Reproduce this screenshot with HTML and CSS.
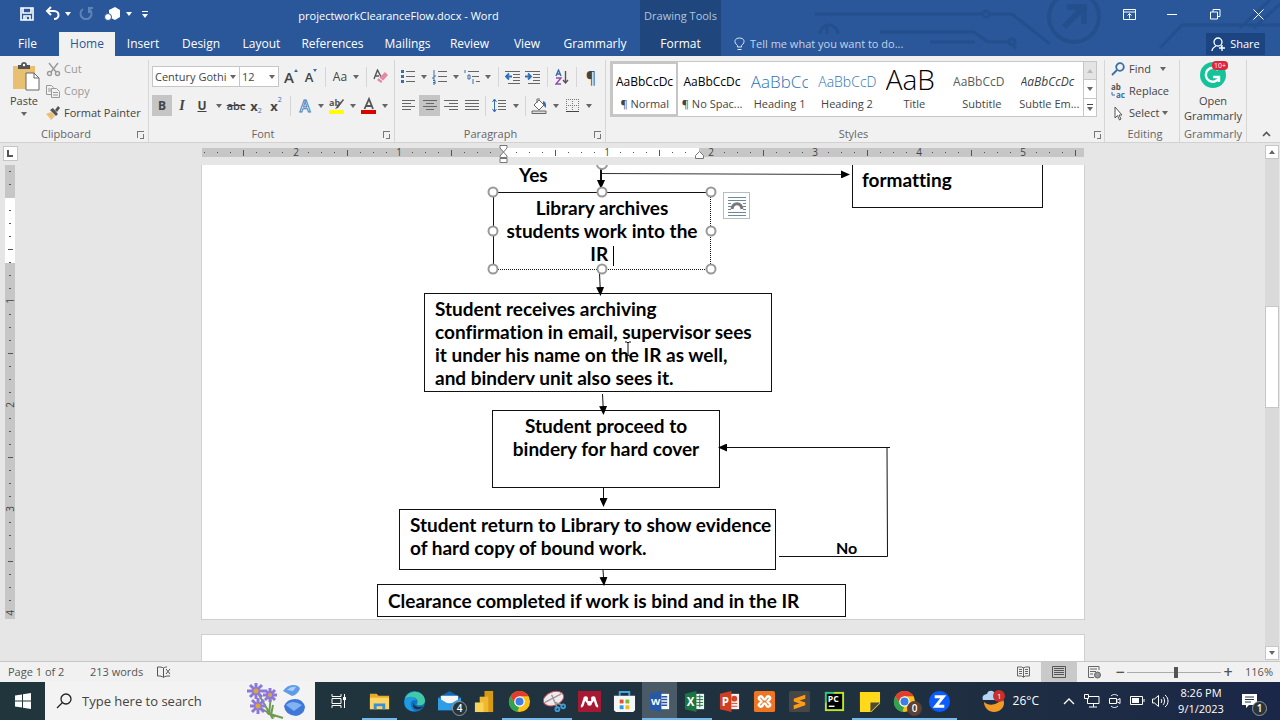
FILE: index.html
```html
<!DOCTYPE html>
<html lang="en">
<head>
  <meta charset="UTF-8" />
  <meta name="viewport" content="width=device-width, initial-scale=1.0" />
  <title>projectworkClearanceFlow.docx - Word</title>
  <link rel="stylesheet" href="styles.css">
</head>
<body>
  <header class="top">
    <svg class="circuit" width="480" height="56" viewBox="0 0 480 56" fill="none" stroke="#214d88" stroke-width="3">
      <path d="M15 14h25M20 34a9 9 0 0 1 18 0M27 34v-8M40 14h142M190 14h22l38 30M80 32h94l14 10h20l8 6M130 42h45" />
      <circle cx="186" cy="14" r="3" /><circle cx="212" cy="42" r="3" />
      <circle cx="274" cy="17" r="25" stroke-width="4" />
      <path d="M264 27l19-19M267 7h17v17" stroke-width="6" />
      <path d="M360 48l22-23h98M440 28l30-28M454 28l26-24" />
    </svg>
    <div class="titlebar">
      <div class="quick">
        <button aria-label="Save"><svg width="16" height="16" viewBox="0 0 16 16" fill="none" stroke="#fff" stroke-width="1.6"><path d="M2 2h12v12H2zM4 2v5h8V2M5 14v-4h6v4M7 11v3" /></svg></button>
        <button class="undo" aria-label="Undo"><svg width="16" height="16" viewBox="0 0 16 16" fill="none" stroke="#fff" stroke-width="2"><path d="M6 1L2 5l4 4M2 5h7c6 0 6 8 0 8" /></svg></button>
        <button class="arrow light" aria-label="Undo list"></button>
        <button class="redo" aria-label="Redo"><svg width="16" height="16" viewBox="0 0 16 16" fill="none" stroke="#5f84b8" stroke-width="2"><path d="M5 3a5.500 5.500 0 1 0 6 0M11 7V2h4" /></svg></button>
        <button class="shapes" aria-label="Shapes"><svg width="18" height="16" viewBox="0 0 18 16" fill="#fff"><path d="M5 4l6-3 5 3v7l-5 3-6-3z" /><circle cx="4" cy="11" r="3.500" stroke="#2a579a" /></svg></button>
        <button class="arrow light" aria-label="Shapes list"></button>
        <button class="arrow light more" aria-label="Customize toolbar"></button>
      </div>
      <div class="title">projectworkClearanceFlow.docx - Word</div>
      <div class="context-title">Drawing Tools</div>
      <div class="window-buttons">
        <button aria-label="Ribbon display"><svg width="13" height="11" viewBox="0 0 13 11" fill="none" stroke="#fff"><path d="M.5 .5h12v10H.5zM.5 3h12M6.500 9.500V5M4.500 6.500l2-2 2 2" /></svg></button>
        <button aria-label="Minimize"><svg width="11" height="11" viewBox="0 0 11 11" stroke="#fff"><path d="M0 5.500h10" /></svg></button>
        <button aria-label="Restore"><svg width="11" height="11" viewBox="0 0 11 11" fill="none" stroke="#fff"><path d="M.5 3h7v7h-7zM3 3V.5h7v7H7.500" /></svg></button>
        <button aria-label="Close"><svg width="11" height="11" viewBox="0 0 11 11" stroke="#fff"><path d="M.5 .5l10 10M10.500 .5l-10 10" /></svg></button>
      </div>
    </div>
    <nav class="tabs">
      <button class="file">File</button><button class="active">Home</button><button>Insert</button>
      <button>Design</button><button>Layout</button><button>References</button>
      <button>Mailings</button><button>Review</button><button>View</button>
      <button>Grammarly</button><button class="context">Format</button>
      <label class="tell">
        <svg width="11" height="14" viewBox="0 0 11 14" fill="none" stroke="#dfe8f5"><path d="M3.500 10V8.500C-1 5 1 1 5.500 1S12 5 7.500 8.500V10zM3.500 12.500h4" /></svg>
        <input type="text" placeholder="Tell me what you want to do..." />
      </label>
      <button class="share"><svg width="15" height="15" viewBox="0 0 15 15" fill="none" stroke="#fff" stroke-width="1.300"><circle cx="7" cy="5" r="4" /><path d="M1 14c0-3 2-4 4-5M10 9l1 1M11 8v6M8 11h6" /></svg>Share</button>
    </nav>
  </header>

  <section class="ribbon">
    <div class="group clipboard">
      <div class="group-body">
        <button class="big">
          <svg width="28" height="29" viewBox="0 0 28 29"><path d="M1 4h22v23H1z" fill="#e9bf72" /><path d="M6 7V3h3c0-4 6-4 6 0h3v4z" fill="#555" /><circle cx="12" cy="3" r="1.200" fill="#fff" /><path d="M14 11h8l5 5v12H14z" fill="#fff" stroke="#666" /><path d="M22 11v5h5" fill="none" stroke="#666" /></svg>
          Paste<i class="caret"></i>
        </button>
        <div class="stack">
          <button class="off"><svg width="15" height="15" viewBox="0 0 15 15" fill="none" stroke="#999" stroke-width="1.400"><path d="M3 1l7 9M12 1L5 10" /><circle cx="3.500" cy="11.500" r="2" /><circle cx="11.500" cy="11.500" r="2" /></svg>Cut</button>
          <button class="off"><svg width="15" height="15" viewBox="0 0 15 15" fill="#f1f1f1" stroke="#999"><path d="M.5 1.500h5l2 2v7h-7zM2 5h3M2 7h3" /><path d="M5.500 4.500h5l3 3v6h-8zM7 8.500h5M7 11h5" /></svg>Copy</button>
          <button><svg width="15" height="15" viewBox="0 0 15 15"><path d="M0 8l5-2 4 4-4 4c-1-2-3-4-5-6z" fill="#e9bf72" /><path d="M4 4l3-2 5 6-2 2zM9 4l3-4 2 2-3 4z" fill="#555" /></svg>Format Painter</button>
        </div>
      </div>
      <div class="group-name">Clipboard<button class="launch" aria-label="Clipboard settings"></button></div>
    </div>

    <div class="group font">
      <div class="group-body rows">
        <div class="row">
          <span class="combo family"><select aria-label="Font"><option>Century Gothic</option></select></span>
          <span class="combo size"><select aria-label="Font size"><option>12</option></select></span>
          <button class="tool" aria-label="Grow font"><span class="grow">A</span><i class="mark up"></i></button>
          <button class="tool" aria-label="Shrink font"><span class="shrink">A</span><i class="mark"></i></button>
          <i class="sep"></i>
          <button class="tool case">Aa</button><button class="arrow" aria-label="Case list"></button>
          <i class="sep"></i>
          <button class="tool" aria-label="Clear formatting"><svg width="16" height="16" viewBox="0 0 16 16"><path d="M1 10L4.500 1 8 8M2.500 7H6" fill="none" stroke="#555" stroke-width="1.400" /><path d="M12 3l3 3-7 8-4-3z" fill="#e68aa2" /><path d="M6 9l4 3" stroke="#fff" /></svg></button>
        </div>
        <div class="row">
          <button class="tool on"><b>B</b></button>
          <button class="tool italic">I</button>
          <button class="tool under">U</button><button class="arrow wide" aria-label="Underline list"></button>
          <button class="tool strike">abc</button>
          <button class="tool script"><b>x</b><sub>2</sub></button>
          <button class="tool script"><b>x</b><sup>2</sup></button>
          <i class="sep"></i>
          <button class="tool effect">A</button><button class="arrow" aria-label="Effects list"></button>
          <button class="tool" aria-label="Highlight"><svg width="18" height="18" viewBox="0 0 18 18"><path d="M1 13h15v4H1z" fill="#ff0" /><text x="1" y="9" font-size="9" font-weight="700" fill="#555">ab</text><path d="M15 2L9 9l-2 3 3-1 6-8z" fill="#555" /></svg></button><button class="arrow" aria-label="Highlight list"></button>
          <button class="tool" aria-label="Font color"><svg width="18" height="18" viewBox="0 0 18 18"><path d="M1 13h15v4H1z" fill="#d90000" /><path d="M4.500 12L9 2l4 10M6 9h6" fill="none" stroke="#555" stroke-width="1.800" /></svg></button><button class="arrow" aria-label="Color list"></button>
        </div>
      </div>
      <div class="group-name">Font<button class="launch" aria-label="Font settings"></button></div>
    </div>

    <div class="group paragraph">
      <div class="group-body rows">
        <div class="row">
          <button class="tool" aria-label="Bullets"><svg class="lines" width="16" height="16" viewBox="0 0 16 16"><path d="M6 2.500h9M6 7.500h9M6 12.500h9" /><path d="M1 2.500h3M1 7.500h3M1 12.500h3" stroke="#3a6ea8" stroke-width="3" /></svg></button><button class="arrow" aria-label="Bullets list"></button>
          <button class="tool" aria-label="Numbering"><svg class="lines" width="16" height="16" viewBox="0 0 16 16"><path d="M6 2.500h9M6 7.500h9M6 12.500h9" /><path d="M2 1v4M1 6h2v2H1v2h2M1 11.500h2v3.500H1M1 13.500h2" stroke="#3a6ea8" /></svg></button><button class="arrow" aria-label="Numbering list"></button>
          <button class="tool" aria-label="Multilevel"><svg class="lines" width="16" height="16" viewBox="0 0 16 16"><path d="M4 2.500h11M8 7.500h7M12 12.500h4" /><path d="M1 1v3M4 6h2v4H4zM9 10v5" stroke="#3a6ea8" /></svg></button><button class="arrow" aria-label="Multilevel list"></button>
          <i class="sep"></i>
          <button class="tool" aria-label="Decrease indent"><svg class="lines" width="16" height="14" viewBox="0 0 16 14"><path d="M0 1.500h15M8 4.500h7M8 7.500h7M8 10.500h7M3 13.500h12" /><path d="M7 6.500H1M4 3.500l-3 3 3 3" stroke="#2f6fb5" stroke-width="1.800" /></svg></button>
          <button class="tool" aria-label="Increase indent"><svg class="lines" width="16" height="14" viewBox="0 0 16 14"><path d="M0 1.500h15M8 4.500h7M8 7.500h7M8 10.500h7M3 13.500h12" /><path d="M0 6.500h6M3 3.500l3 3-3 3" stroke="#2f6fb5" stroke-width="1.800" /></svg></button>
          <i class="sep"></i>
          <button class="tool" aria-label="Sort"><svg width="15" height="16" viewBox="0 0 15 16" fill="none" stroke-width="1.400"><path d="M1 7l2.500-6L6 7M2 5h3" stroke="#3a6ea8" /><path d="M1 9h5l-5 6h5" stroke="#8e4fa8" /><path d="M10.500 2v12M8 11l2.500 3 2.500-3" stroke="#555" /></svg></button>
          <i class="sep"></i>
          <button class="tool pilcrow">¶</button>
        </div>
        <div class="row align">
          <button class="tool" aria-label="Align left"><svg class="lines" width="14" height="13" viewBox="0 0 14 13"><path d="M0 1.500h13M0 4.500h9M0 7.500h13M0 10.500h9" /></svg></button>
          <button class="tool on" aria-label="Center"><svg class="lines" width="14" height="13" viewBox="0 0 14 13"><path d="M0 1.500h14M3 4.500h8M0 7.500h14M3 10.500h8" /></svg></button>
          <button class="tool" aria-label="Align right"><svg class="lines" width="14" height="13" viewBox="0 0 14 13"><path d="M0 1.500h14M5 4.500h9M0 7.500h14M5 10.500h9" /></svg></button>
          <button class="tool" aria-label="Justify"><svg class="lines" width="14" height="13" viewBox="0 0 14 13"><path d="M0 1.500h14M0 4.500h14M0 7.500h14M0 10.500h14" /></svg></button>
          <i class="sep"></i>
          <button class="tool" aria-label="Line spacing"><svg class="lines" width="16" height="15" viewBox="0 0 16 15"><path d="M6 2.500h8M6 5.500h8M6 8.500h8M6 11.500h8" /><path d="M2.500 1v13M.5 4l2-3 2 3M.5 11l2 3 2-3" stroke="#3a6ea8" /></svg></button><button class="arrow" aria-label="Spacing list"></button>
          <i class="sep"></i>
          <button class="tool" aria-label="Shading"><svg width="17" height="16" viewBox="0 0 17 16" fill="#fff" stroke="#666"><path d="M3 7l5-5 5 5-5 5zM6 5V1h3" /><path d="M12 3c4 1 3 5 3 7l-3-3z" fill="#3a6ea8" stroke="none" /><path d="M1 13h14v2.500H1z" fill="#ddd" /></svg></button><button class="arrow" aria-label="Shading list"></button>
          <button class="tool" aria-label="Borders"><svg width="14" height="14" viewBox="0 0 14 14" fill="none" stroke="#777" stroke-dasharray="1 1"><path d="M.5 0v12M6.500 0v12M12.500 0v12M0 .5h13M0 6.500h13" /><path d="M0 12.500h13" stroke="#444" stroke-dasharray="none" /></svg></button><button class="arrow" aria-label="Borders list"></button>
        </div>
      </div>
      <div class="group-name">Paragraph<button class="launch" aria-label="Paragraph settings"></button></div>
    </div>

    <div class="group styles">
      <div class="gallery">
        <button class="picked"><span class="sample">AaBbCcDc</span>¶ Normal</button>
        <button><span class="sample">AaBbCcDc</span>¶ No Spac...</button>
        <button><span class="sample h1">AaBbCc</span>Heading 1</button>
        <button><span class="sample h2">AaBbCcD</span>Heading 2</button>
        <button><span class="sample big-title">AaB</span>Title</button>
        <button><span class="sample subtitle">AaBbCcD</span>Subtitle</button>
        <button><span class="sample emphasis">AaBbCcDc</span>Subtle Em...</button>
        <div class="gallery-scroll">
          <button class="arrow up" aria-label="Previous styles"></button>
          <button class="arrow" aria-label="Next styles"></button>
          <button class="arrow more" aria-label="All styles"></button>
        </div>
      </div>
      <div class="group-name">Styles<button class="launch" aria-label="Styles settings"></button></div>
    </div>

    <div class="group editing">
      <div class="stack">
        <button><svg width="15" height="14" viewBox="0 0 15 14" fill="none" stroke="#3a6ea8" stroke-width="1.800"><circle cx="9" cy="5" r="3.800" /><path d="M6 8l-5 5" /></svg>Find<i class="caret far"></i></button>
        <button><svg width="15" height="16" viewBox="0 0 15 16"><text x="0" y="7" font-size="8" font-weight="700" fill="#555">ab</text><text x="5" y="15" font-size="8" font-weight="700" fill="#3a6ea8">ac</text><path d="M1 9v3h3" fill="none" stroke="#3a6ea8" /></svg>Replace</button>
        <button><svg width="15" height="15" viewBox="0 0 15 15" fill="#fff" stroke="#555"><path d="M4 1v11l2.500-2.500L8.500 14l1.500-1-2-4h3z" /></svg>Select<i class="caret"></i></button>
      </div>
      <div class="group-name">Editing</div>
    </div>

    <div class="group grammarly">
      <button class="big">
        <svg width="28" height="28" viewBox="0 0 28 28" fill="none"><circle cx="14" cy="14" r="13" fill="#15c39a" /><path d="M19 9a7 7 0 1 0 1 8M14 16h6v5" stroke="#fff" stroke-width="2.400" /></svg>
        <em class="count">10+</em>
        <span>Open<br>Grammarly</span>
      </button>
      <div class="group-name">Grammarly</div>
    </div>

    <button class="collapse" aria-label="Collapse ribbon"><svg width="9" height="6" viewBox="0 0 9 6" fill="none" stroke="#555" stroke-width="1.600"><path d="M1 5l3.500-3.500L8 5" /></svg></button>
  </section>

  <main class="editor">
    <button class="tab-stop" aria-label="Tab stop"><svg width="7" height="7" viewBox="0 0 7 7" fill="none" stroke="#555" stroke-width="2"><path d="M1 0v6h5" /></svg></button>
    <div class="ruler-row">
      <svg class="ruler" width="882" height="20" viewBox="0 0 882 20">
        <defs>
          <pattern id="inch" x="93" y="0" width="104" height="20" patternUnits="userSpaceOnUse">
            <path d="M13 9.500h1M26 9.500h1M39 9.500h1M65 9.500h1M78 9.500h1M91 9.500h1" stroke="#555" />
            <path d="M52.500 7v6" stroke="#555" />
          </pattern>
        </defs>
        <path d="M0 5h882v9H0z" fill="#c6c6c6" />
        <path d="M301 5h196v9H301z" fill="#fff" />
        <path d="M0 4h882v11H0z" fill="url(#inch)" />
        <g font-size="10" fill="#444" text-anchor="middle">
          <text x="94" y="13">2</text><text x="197" y="13">1</text><text x="405" y="13">1</text>
          <text x="509" y="13">2</text><text x="613" y="13">3</text><text x="717" y="13">4</text><text x="821" y="13">5</text>
        </g>
        <g fill="#fff" stroke="#777">
          <path d="M298 2.500h7v2.500l-3.500 4-3.500-4zM301.500 9l3.500 4v1.500h-7V13zM298 15.500h7v4h-7z" />
          <path d="M497.500 8.500l4 4v3h-8v-3z" />
        </g>
      </svg>
    </div>
    <div class="scrollbar">
      <button class="arrow up" aria-label="Scroll up"></button>
      <div class="track"><div class="thumb"></div></div>
      <button class="arrow" aria-label="Scroll down"></button>
    </div>
    <div class="side-ruler">
      <svg width="10" height="454" viewBox="0 0 10 454">
        <defs>
          <pattern id="side-inch" x="0" y="32" width="10" height="104" patternUnits="userSpaceOnUse">
            <path d="M4 13.500h2M4 26.500h2M4 39.500h2M3 52.500h5M4 65.500h2M4 78.500h2M4 91.500h2" stroke="#555" />
          </pattern>
        </defs>
        <path d="M0 0h10v454H0z" fill="#c6c6c6" />
        <path d="M0 33h10v65H0z" fill="#fff" />
        <path d="M0 0h10v454H0z" fill="url(#side-inch)" />
        <g font-size="10" fill="#444" text-anchor="middle">
          <text transform="translate(9 136) rotate(-90)">1</text><text transform="translate(9 240) rotate(-90)">2</text>
          <text transform="translate(9 344) rotate(-90)">3</text><text transform="translate(9 448) rotate(-90)">4</text>
        </g>
      </svg>
    </div>
    <div class="canvas">
      <article class="page flow">
        <div class="node formatting">formatting</div>
        <div class="node archive">Library archives<br>students work into the<br>IR <i class="text-cursor"></i></div>
        <div class="node receive"><p>Student receives archiving<br>confirmation in email, supervisor sees<br>it under his name on the IR as well,<br>and bindery unit also sees it.</p></div>
        <div class="node proceed">Student proceed to<br>bindery for hard cover</div>
        <div class="node return">Student return to Library to show evidence<br>of hard copy of bound work.</div>
        <div class="node clear"><p>Clearance completed if work is bind and in the IR</p></div>
        <span class="word yes">Yes</span>
        <span class="word no">No</span>
        <!-- connectors and selection handles -->
        <svg class="links" width="882" height="454" viewBox="0 0 882 454" fill="none" stroke="#111">
          <defs>
            <marker id="tip" viewBox="0 0 9 8" refX="8" refY="4" markerWidth="9" markerHeight="8" markerUnits="userSpaceOnUse" orient="auto"><path d="M0 0l9 4-9 4z" fill="#000" stroke="none" /></marker>
          </defs>
          <path d="M399 0v23" stroke-width="2" marker-end="url(#tip)" />
          <path d="M400 8.500l247 1" stroke="#333" marker-end="url(#tip)" />
          <path d="M397.500 108l1 22" marker-end="url(#tip)" />
          <path d="M400.500 229l1 20" marker-end="url(#tip)" />
          <path d="M401.500 323v18" marker-end="url(#tip)" />
          <path d="M401 405l1 15" marker-end="url(#tip)" />
          <path d="M577 391.500h108.500L685 282" />
          <path d="M688 282.500H517" marker-end="url(#tip)" />
          <g fill="#fff" stroke="#999" stroke-width="2">
            <circle cx="400" cy="-1" r="5" />
            <circle cx="291" cy="27" r="4.500" /><circle cx="400" cy="27" r="4.500" /><circle cx="509" cy="27" r="4.500" />
            <circle cx="291" cy="66" r="4.500" /><circle cx="509" cy="66" r="4.500" />
            <circle cx="291" cy="104" r="4.500" /><circle cx="400" cy="104" r="4.500" /><circle cx="509" cy="104" r="4.500" />
          </g>
          <path d="M423 177h2l1 1 1-1h2M426 178v12M423 191h2l1-1 1 1h2" />
        </svg>
        <button class="wrap-options" aria-label="Layout options"><svg width="20" height="20" viewBox="0 0 20 20" fill="none" stroke="#6f8796"><path d="M1 1.500h18M1 4.500h18M1 7.500h3M16 7.500h3M1 10.500h3M16 10.500h3M1 13.500h3M16 13.500h3M1 16.500h18M1 19.500h18" /><path d="M5 13c1-7 9-7 10 0" stroke="#777" stroke-width="3" /></svg></button>
      </article>
      <article class="page next"></article>
    </div>
  </main>

  <footer class="status">
    <span class="pages">Page 1 of 2</span>
    <span class="words">213 words</span>
    <button aria-label="Proofing"><svg width="14" height="12" viewBox="0 0 14 12" fill="none" stroke="#555"><path d="M6.500 11V2C5 1 3 1 .5 1v9c2.500 0 4.500 0 6 1.500C8 10 10 10 13 10M6.500 2C8 1 9 1 10 1M9 3l4 5M13 3L9 8" /></svg></button>
    <span class="fill"></span>
    <button class="view" aria-label="Read mode"><svg width="13" height="12" viewBox="0 0 13 12" fill="none" stroke="#666"><path d="M6.500 1.500v10M.5 1h4l2 1 2-1h4v9h-4l-2 1-2-1h-4zM2 3.500h3M2 5.500h3M2 7.500h3M8 3.500h3M8 5.500h3M8 7.500h3" /></svg></button>
    <button class="view on" aria-label="Print layout"><svg width="14" height="13" viewBox="0 0 14 13" fill="none" stroke="#555"><path d="M.5 .5h13v11H.5zM2 2.500h10M2 4.500h10M2 6.500h10M2 8.500h10" /></svg></button>
    <button class="view" aria-label="Web layout"><svg width="14" height="13" viewBox="0 0 14 13" fill="none" stroke="#666"><path d="M11 4V.5H.5v11H6M2 3h7M2 5.500h6M2 8h3" /><circle cx="9.500" cy="9" r="3" fill="#999" /></svg></button>
    <button class="zoom-step">−</button>
    <input class="zoom" type="range" min="0" max="100" value="52" aria-label="Zoom" />
    <button class="zoom-step">+</button>
    <span class="percent">116%</span>
  </footer>

  <div class="taskbar">
    <button class="start" aria-label="Start"><svg width="16" height="16" viewBox="0 0 16 16" fill="#fff"><path d="M0 2.500l7-1v6H0zM8 1.300L16 0v7.500H8zM0 8.500h7v6l-7-1zM8 8.500h8V16l-8-1.300z" /></svg></button>
    <label class="search">
      <svg width="16" height="16" viewBox="0 0 16 16" fill="none" stroke="#222" stroke-width="1.300"><circle cx="10" cy="6" r="5" /><path d="M6.500 9.500L1 15" /></svg>
      <input type="text" placeholder="Type here to search" />
      <svg width="62" height="36" viewBox="0 0 62 36">
        <path d="M14 12l14 24M26 12l-2 20M14 24l16 10M28 22l-2 10M22 30l16 5" fill="none" stroke="#6f9a55" stroke-width="2" />
        <g stroke="#8c78d8" stroke-width="3">
          <path d="M2 8h18M11 0v16M5 2l12 12M17 2L5 14M18 12h14M25 5v14M20 7l10 10M30 7L20 17M5 23h16M13 15v16M7 17l12 12M19 17L7 29" />
        </g>
        <g fill="#d9a63c"><circle cx="11" cy="8" r="2.500" /><circle cx="25" cy="12" r="2" /><circle cx="13" cy="23" r="2.500" /></g>
        <path d="M38 8q4-6 10-6t7 4q-3 6-8 7z" fill="#5f9be8" /><path d="M42 7q4-4 9-3l-3 4z" fill="#a9d0fa" />
        <path d="M39 23q3-7 11-7t10 8q-1 8-9 9-11-1-12-10z" fill="#3f78d8" /><path d="M41 22q6-6 16 0l-8 6z" fill="#7fb3f2" />
      </svg>
    </label>
    <button class="task-view" aria-label="Task view"><svg width="16" height="14" viewBox="0 0 16 14" fill="none" stroke="#fff"><path d="M1 0v2.500h9V0M1 4.500h9v5H1zM1 14v-2.500h9V14M13.500 0v14" /><path d="M12 3h3v3h-3z" fill="#fff" stroke="none" /></svg></button>
    <div class="apps">
      <button class="open" aria-label="Explorer"><svg viewBox="0 0 24 24"><path d="M2 4h7l2 2h11v14H2z" fill="#e8a92c" /><path d="M2 8h20v12H2z" fill="#fbd565" /><path d="M6 20v-6h12v6h-3v-3H9v3z" fill="#3b8fd6" /></svg></button>
      <button aria-label="Edge"><svg viewBox="0 0 24 24"><circle cx="12" cy="12" r="11" fill="#1173c7" /><path d="M2 9C5-1 22-1 23 11c0 5-5 6-9 4 4-4-2-11-12-6z" fill="#42c9a5" /><path d="M2 9c7-4 11-1 12 2-6-3-9 5-2 11C3 22 0 15 2 9z" fill="#1f9ce0" /><path d="M11 13c0 4 5 6 10 4-4 6-13 3-10-4z" fill="#1f353c" /></svg></button>
      <button aria-label="Mail"><svg viewBox="0 0 24 24"><path d="M0 8l12-7 12 7v13H0z" fill="#0f6ab8" /><path d="M3 6h18v8H3z" fill="#f5f5f5" /><path d="M0 8l12 7 12-7v13H0z" fill="#2f9ee6" /></svg><em class="badge">4</em></button>
      <button aria-label="Power BI"><svg viewBox="0 0 24 24"><path d="M12 1h9v22h-9z" fill="#d79a13" /><path d="M7 7h9v16H7z" fill="#eeb92e" /><path d="M2 13h9v10H2z" fill="#f8d35a" /></svg></button>
      <button class="open" aria-label="Chrome"><svg viewBox="0 0 24 24"><circle cx="12" cy="12" r="11" fill="#fbc116" /><path d="M2.500 6.500a11 11 0 0 1 19 0H12l-5 8z" fill="#e33b2e" /><path d="M2.500 6.500l5 8.500 4 3-2 5C1 21-1 12 2.500 6.500z" fill="#31a350" /><circle cx="12" cy="12" r="5.500" fill="#fff" /><circle cx="12" cy="12" r="4.200" fill="#3b7de9" /></svg></button>
      <button class="open" aria-label="Snipping Tool"><svg viewBox="0 0 24 24" fill="none"><ellipse cx="11" cy="9" rx="11" ry="7" transform="rotate(-20 11 9)" fill="#f2e9ec" stroke="#c44a58" /><path d="M2 13l17-9M9 5l6 14M13 13l8 3" stroke="#999" stroke-width="1.500" /><circle cx="15" cy="20" r="2" stroke="#3b9bd6" stroke-width="2" /><circle cx="21" cy="17" r="2" stroke="#3b9bd6" stroke-width="2" /></svg></button>
      <button aria-label="Mendeley"><svg viewBox="0 0 24 24"><path d="M0 1h24v22H0z" fill="#a71932" /><path d="M3 17c3 0 2-6 4-7 2 0 3 4 5 4s3-4 5-4c2 1 1 7 4 7" fill="none" stroke="#fff" stroke-width="2.500" /><circle cx="8" cy="9" r="2.500" fill="#fff" /><circle cx="16" cy="9" r="2.500" fill="#fff" /><circle cx="12" cy="14" r="2.500" fill="#fff" /></svg></button>
      <button aria-label="Store"><svg viewBox="0 0 24 24"><path d="M7 6V2h10v4" fill="none" stroke="#3fa7e4" stroke-width="2" /><path d="M1 6h22v15l-2 2H3l-2-2z" fill="#f4f6f8" /><path d="M7 10h4v4H7z" fill="#e8502e" /><path d="M13 10h4v4h-4z" fill="#7fb928" /><path d="M7 16h4v4H7z" fill="#2a9be0" /><path d="M13 16h4v4h-4z" fill="#f8b812" /></svg></button>
      <button class="open current" aria-label="Word"><svg viewBox="0 0 24 24"><path d="M11 4h11v16H11z" fill="#f3f6fb" /><path d="M14 7h6M14 10h6M14 13h6M14 16h6" stroke="#2b579a" stroke-width="1.500" /><path d="M2 4l12-3v22L2 20z" fill="#2558a8" /><text x="3" y="16" font-size="10" font-weight="700" fill="#fff">W</text></svg></button>
      <button class="open" aria-label="Excel"><svg viewBox="0 0 24 24"><path d="M11 4h11v16H11z" fill="#eef7f1" /><path d="M14 7h7M14 10h7M14 13h7M14 16h7M17.500 5v13" stroke="#1f7244" /><path d="M2 4l12-3v22L2 20z" fill="#1b7543" /><text x="4" y="17" font-size="12" font-weight="700" fill="#fff">X</text></svg></button>
      <button aria-label="PowerPoint"><svg viewBox="0 0 24 24"><path d="M11 4h11v16H11z" fill="#fbeeea" /><circle cx="17" cy="9" r="3" fill="#d24625" /><path d="M14 14h6M14 17h6" stroke="#d24625" /><path d="M2 4l12-3v22L2 20z" fill="#d03f22" /><text x="4" y="17" font-size="12" font-weight="700" fill="#fff">P</text></svg></button>
      <button aria-label="XAMPP"><svg viewBox="0 0 24 24"><rect x="1" y="1" width="22" height="22" rx="2" fill="#ee7623" /><path d="M7 7c3-2 3 3 5 3s2-5 5-3-2 4-2 5 5 3 2 5-3-3-5-3-2 5-5 3 2-4 2-5-5-3-2-5z" fill="none" stroke="#fff" stroke-width="2.500" /></svg></button>
      <button aria-label="Sublime Text"><svg viewBox="0 0 24 24"><rect x="1" y="1" width="22" height="22" rx="2" fill="#474747" /><path d="M6 9l12-4v4l-6 2 6 2v3L6 20v-4l6-2-6-2z" fill="#ff9c17" /></svg></button>
      <button aria-label="PyCharm"><svg viewBox="0 0 24 24"><path d="M2 2h20v20H2z" fill="#b7e928" /><path d="M2 2h10L2 14z" fill="#25c98a" /><path d="M4 4h16v16H4z" fill="#000" /><text x="5" y="13" font-size="9" font-weight="700" fill="#fff">PC</text><path d="M6 17h6" stroke="#fff" stroke-width="1.500" /></svg></button>
      <button class="open" aria-label="Sticky Notes"><svg viewBox="0 0 24 24"><path d="M2 2h21v12l-9 9H2z" fill="#ffd91a" /><path d="M13 13h10L13 23z" fill="#4d4a3a" /></svg></button>
      <button class="open" aria-label="Chrome profile"><svg viewBox="0 0 24 24"><circle cx="12" cy="12" r="11" fill="#fbc116" /><path d="M2.500 6.500a11 11 0 0 1 19 0H12l-5 8z" fill="#e33b2e" /><path d="M2.500 6.500l5 8.500 4 3-2 5C1 21-1 12 2.500 6.500z" fill="#31a350" /><circle cx="12" cy="12" r="5.500" fill="#fff" /><circle cx="12" cy="12" r="4.200" fill="#3b7de9" /></svg><em class="badge brown">0</em></button>
      <button class="open" aria-label="Zoom app"><svg viewBox="0 0 24 24"><circle cx="12" cy="12" r="11" fill="#0b5cff" /><path d="M7 7h9L8 17h9" fill="none" stroke="#fff" stroke-width="3" /></svg></button>
    </div>
    <div class="tray">
      <button class="weather"><svg width="24" height="22" viewBox="0 0 24 22"><path d="M2 12c4 4 14 4 18-4 5 6 0 14-8 14-5 0-10-4-10-10z" fill="#f29a26" /><path d="M1 10c-2-5 3-6 4-6 1-5 8-4 8 1 3 1 2 5 0 5z" fill="#b9d3f3" /><circle cx="17" cy="6" r="6" fill="#c9302c" /><text x="15" y="9" font-size="8" fill="#fff">1</text></svg>26°C</button>
      <button aria-label="Hidden icons"><svg width="12" height="8" viewBox="0 0 12 8" fill="none" stroke="#fff" stroke-width="1.300"><path d="M1 7l5-5 5 5" /></svg></button>
      <button aria-label="Network"><svg width="16" height="14" viewBox="0 0 16 14" fill="none" stroke="#fff"><path d="M5 2.500h10v7H3.500V5M9.500 10v3M5 13h8M.5 .5h4v4h-4z" /></svg></button>
      <button aria-label="Meet now"><svg width="12" height="16" viewBox="0 0 12 16" fill="none" stroke="#fff"><path d="M.5 5.500h7v5h-7zM7.500 7.500l3.500-2v5l-3.500-2M2 3c2-2 5-2 7 0M2 13c2 2 5 2 7 0" /></svg></button>
      <button aria-label="Battery"><svg width="15" height="10" viewBox="0 0 15 10" fill="none" stroke="#fff"><path d="M.5 .5h12v8H.5zM14 3v3" /><path d="M2 2h7v5H2z" fill="#fff" stroke="none" /></svg></button>
      <button aria-label="Volume"><svg width="17" height="14" viewBox="0 0 17 14" fill="none" stroke="#fff"><path d="M.5 5v4h2l4 3.500v-11L2.500 5zM9 5c1 1 1 3 0 4M11 3c2 2 2 6 0 8M13 1c4 3 4 9 0 12" /></svg></button>
      <div class="clock"><time>8:26 PM</time><time>9/1/2023</time></div>
      <button class="notes" aria-label="Notifications"><svg width="16" height="16" viewBox="0 0 16 16"><path d="M0 1h15v11H7l-3 3v-3H0z" fill="#fff" /><path d="M3 4h9M3 6.500h9M3 9h6" stroke="#1f3448" /></svg><em class="badge">1</em></button>
    </div>
  </div>
</body>
</html>
```
FILE: styles.css
```css
* {
  box-sizing: border-box;
}
body {
  margin: 0;
  height: 100vh;
  display: flex;
  flex-direction: column;
  overflow: hidden;
  font-family: "Open Sans", "Noto Sans", sans-serif;
  font-size: 12px;
  line-height: 16px;
  color: #444;
  background: #e6e6e6;
}
button, input, select {
  margin: 0;
  padding: 0;
  border: none;
  border-radius: 0;
  background: none;
  color: inherit;
  font: inherit;
}
button {
  display: flex;
  align-items: center;
  justify-content: center;
}
svg {
  flex: none;
  display: block;
}
p {
  margin: 0;
}

/* title bar and tabs */
.top {
  position: relative;
  background: #2a579a;
  color: #fff;
}
.circuit {
  position: absolute;
  top: 0;
  right: 0;
  opacity: 0.7;
}
.titlebar {
  position: relative;
  display: grid;
  grid-template-columns: 157px 483px 81px 1fr;
  height: 32px;
}
.quick {
  display: flex;
  align-items: center;
  gap: 1px;
  padding: 0 0 4px 19px;
}
.undo, .shapes {
  margin-left: 9px;
}
.redo, .quick .more {
  margin-left: 3px;
}
.title, .context-title {
  display: flex;
  align-items: center;
  justify-content: center;
  font-size: 11px;
}
.context-title {
  background: #1f477d;
  color: #b4c5de;
}
.window-buttons {
  display: flex;
  justify-content: flex-end;
  padding-bottom: 4px;
}
.window-buttons button {
  width: 43px;
}
.tabs {
  position: relative;
  display: grid;
  grid-template-columns: 59px 56px 56px 60px 61px 81px 69px 55px 60px 76px 7px 81px 1fr 59px;
  height: 24px;
  padding-right: 15px;
}
.tabs .file {
  padding-right: 4px;
}
.tabs .active {
  background: #f1f1f1;
  color: #2a579a;
}
.tabs .context {
  grid-column: 12;
  background: #1f477d;
}
.tell {
  display: flex;
  align-items: center;
  gap: 5px;
  padding-left: 13px;
  font-size: 11px;
}
.tell input {
  width: 200px;
}
.tell input::placeholder {
  color: #c5d3e8;
  opacity: 1;
}
.tabs .share {
  gap: 4px;
  margin: 1px 0;
  background: #1b4480;
  font-size: 11px;
}

/* ribbon */
.ribbon {
  display: flex;
  height: 87px;
  padding: 4px 0 0;
  background: #f1f1f1;
  border-bottom: 1px solid #d2d2d2;
}
.group {
  display: flex;
  flex-direction: column;
  justify-content: space-between;
  border-right: 1px solid #d6d6d6;
}
.group-body {
  display: flex;
}
.group-name {
  position: relative;
  text-align: center;
  font-size: 11px;
  color: #666;
}
.clipboard { width: 149px; padding-left: 8px; }
.font { width: 246px; padding-left: 3px; }
.paragraph { width: 211px; padding-left: 3px; }
.styles { flex: 1; padding: 0 7px 0 4px; }
.editing { width: 75px; padding-left: 6px; }
.grammarly { width: 67px; }
.font .group-name { padding-right: 20px; }
.paragraph .group-name { padding-right: 22px; }
.clipboard .group-name { padding-right: 24px; }
.launch {
  position: absolute;
  right: 4px;
  bottom: 4px;
  width: 7px;
  height: 7px;
  border-top: 1px solid #777;
  border-left: 1px solid #777;
}
.launch::after {
  content: "";
  margin: 2px 0 0 2px;
  width: 4px;
  height: 4px;
  border-right: 1px solid #777;
  border-bottom: 1px solid #777;
}
.styles .launch {
  right: -4px;
}
.big {
  position: relative;
  flex-direction: column;
  font-size: 11px;
  line-height: 15px;
}
.clipboard .big {
  width: 32px;
  margin-right: 6px;
  justify-content: flex-start;
  padding-top: 2px;
}
.clipboard .big svg {
  margin-left: 4px;
  margin-bottom: 2px;
}
.caret, .arrow::before {
  content: "";
  border: 3px solid transparent;
  border-top: 4px solid #666;
  border-bottom: 0;
}
.clipboard .caret {
  margin-top: 4px;
}
.stack {
  display: flex;
  flex-direction: column;
  margin-top: -2px;
}
.stack button {
  height: 22px;
  gap: 3px;
  justify-content: flex-start;
  font-size: 11px;
  white-space: nowrap;
}
.stack .off {
  color: #999;
}
.stack .far {
  margin-left: 6px;
}
.rows {
  flex-direction: column;
  gap: 8px;
  padding-top: 6px;
}
.row {
  display: flex;
  align-items: center;
  height: 21px;
}
.tool {
  width: 20px;
  height: 21px;
}
.align .tool {
  width: 21px;
}
.align .sep {
  margin: 0 3px;
}
.tool.on {
  background: #c5c5c5;
}
.arrow {
  width: 12px;
  height: 12px;
}
.arrow.wide {
  width: 14px;
}
.arrow.light::before {
  border-top-color: #fff;
}
.arrow.up::before {
  border-top: 0;
  border-bottom: 4px solid #666;
}
.arrow.more {
  flex-direction: column;
}
.arrow.more::after {
  content: "";
  order: -1;
  width: 6px;
  height: 1px;
  margin-bottom: 2px;
  background: currentColor;
}
.sep {
  width: 1px;
  height: 20px;
  margin: 0 4px;
  background: #d6d6d6;
}
.combo {
  position: relative;
  display: flex;
  height: 21px;
  padding-right: 12px;
  border: 1px solid #c6c6c6;
  background: #fff;
  font-size: 11px;
}
.combo select {
  width: 100%;
  padding-left: 2px;
  appearance: none;
  text-overflow: clip;
}
.combo::before {
  content: "";
  position: absolute;
  right: 3px;
  top: 8px;
  border: 3px solid transparent;
  border-top: 4px solid #666;
  border-bottom: 0;
}
.family { width: 88px; }
.size { width: 40px; margin-left: -1px; margin-right: 2px; }
.grow { font-size: 15px; font-weight: 600; }
.shrink { font-size: 13px; font-weight: 600; }
.mark {
  align-self: flex-start;
  margin-top: 3px;
  border: 2px solid transparent;
  border-top: 3px solid #3a6ea8;
  border-bottom: 0;
}
.mark.up {
  border-top: 0;
  border-bottom: 3px solid #3a6ea8;
}
.italic { font: italic bold 14px "Liberation Serif", serif; }
.under { font-weight: 700; text-decoration: underline; }
.strike { font-size: 11px; font-weight: 600; text-decoration: line-through; }
.script b { font-size: 13px; }
.script sub, .script sup {
  font-size: 7px;
  line-height: 8px;
  color: #2f6fb5;
}
.script sub { align-self: flex-end; margin-bottom: 1px; }
.script sup { align-self: flex-start; margin-top: 1px; }
.effect {
  font-size: 16px;
  font-weight: 600;
  color: #fff;
  -webkit-text-stroke: 1px #4a80c0;
}
.pilcrow { font-size: 16px; }
.lines {
  fill: none;
  stroke: #666;
}
.gallery {
  display: flex;
  height: 56px;
  margin-top: 1px;
  border: 1px solid #c6c6c6;
  background: #fff;
}
.gallery > button {
  flex: 1 1 0;
  min-width: 0;
  flex-direction: column;
  padding: 2px 5px 0;
  overflow: hidden;
  white-space: nowrap;
  font-size: 11px;
}
.gallery .picked {
  padding: 2px 3px 0;
  border: 2px solid #c6c6c6;
}
.sample {
  width: 100%;
  height: 28px;
  overflow: hidden;
  line-height: 28px;
  text-align: left;
  font-size: 12px;
  color: #000;
}
.sample.h1 { font-size: 17px; font-weight: 300; color: #2e74b5; }
.sample.h2 { font-size: 14px; font-weight: 300; color: #2e74b5; }
.sample.big-title { font-size: 28px; font-weight: 300; line-height: 22px; }
.sample.subtitle { color: #5a5a5a; }
.sample.emphasis { font-style: italic; color: #404040; }
.gallery-scroll {
  display: flex;
  flex-direction: column;
  border-left: 1px solid #c6c6c6;
}
.gallery-scroll button {
  flex: 1;
  width: 12px;
}
.gallery-scroll button + button {
  border-top: 1px solid #c6c6c6;
}
.gallery-scroll .up {
  background: #e4e4e4;
}
.gallery-scroll .up::before {
  border-bottom-color: #bbb;
}
.count {
  position: absolute;
  top: 0;
  right: 18px;
  padding: 0 2px;
  border-radius: 4px;
  background: #e0243b;
  color: #fff;
  font-size: 7px;
  font-style: normal;
  line-height: 9px;
}
.grammarly .big {
  margin-top: 1px;
}
.grammarly .big svg {
  margin-bottom: 4px;
}
.collapse {
  width: 33px;
  align-self: flex-end;
  padding-bottom: 5px;
  padding-left: 5px;
}

/* document area */
.editor {
  flex: 1;
  min-height: 0;
  display: grid;
  grid-template-columns: 22px 1fr 16px;
  grid-template-rows: 22px 1fr;
}
.tab-stop {
  width: 15px;
  height: 15px;
  margin: 3px;
  border: 1px solid #c6c6c6;
  background: #fff;
}
.ruler {
  margin: 0 auto;
}
.scrollbar {
  grid-column: 3;
  grid-row: 1 / 3;
  display: flex;
  flex-direction: column;
  margin: 2px 1px 1px;
  background: #dadada;
}
.scrollbar button {
  width: 14px;
  height: 14px;
  border: 1px solid #c6c6c6;
  background: #fff;
}
.track {
  flex: 1;
}
.thumb {
  height: 21%;
  margin-top: 147px;
  border: 1px solid #c6c6c6;
  background: #fff;
}
.side-ruler {
  grid-column: 1;
  grid-row: 2;
  padding-left: 5px;
  overflow: hidden;
}
.canvas {
  grid-column: 2;
  grid-row: 2;
  overflow: hidden;
}
.page {
  position: relative;
  width: 882px;
  margin: 0 auto 16px;
  background: #fff;
  box-shadow: 0 0 0 1px #cfcfcf;
}
.flow {
  height: 454px;
  color: #000;
  font-family: Lato, sans-serif;
  font-size: 19px;
  font-weight: 700;
  font-variant-ligatures: none;
  line-height: 23px;
}
.next {
  height: 400px;
}
.node {
  position: absolute;
  padding: 3px 10px 0;
  border: 1px solid #111;
  white-space: nowrap;
}
.node p {
  overflow: hidden;
}
.formatting { left: 650px; top: -20px; width: 191px; height: 63px; padding: 22px 9px 0; }
.archive { left: 291px; top: 27px; width: 218px; height: 78px; border-right-style: dotted; border-bottom-style: dotted; text-align: center; }
.receive { left: 222px; top: 128px; width: 348px; height: 99px; }
.receive p { height: 88px; }
.proceed { left: 290px; top: 245px; width: 228px; height: 78px; text-align: center; }
.return { left: 197px; top: 344px; width: 377px; height: 61px; }
.clear { left: 175px; top: 419px; width: 469px; height: 33px; padding-top: 4px; }
.clear p { height: 20px; }
.text-cursor {
  display: inline-block;
  width: 1px;
  height: 20px;
  background: #000;
  vertical-align: middle;
}
.word {
  position: absolute;
}
.yes { left: 317px; top: -2px; }
.no { left: 634px; top: 371px; font-size: 16px; }
.links {
  position: absolute;
  left: 0;
  top: 0;
}
.wrap-options {
  position: absolute;
  left: 521px;
  top: 27px;
  width: 27px;
  height: 27px;
  border: 1px solid #b5bcc2;
  background: #fff;
}

/* status bar */
.status {
  display: flex;
  align-items: center;
  height: 21px;
  padding: 0 7px 0 8px;
  border-top: 1px solid #c6c6c6;
  background: #f1f1f1;
  font-size: 11px;
  line-height: 14px;
  color: #555;
}
.pages { width: 82px; }
.words { width: 67px; }
.fill { flex: 1; }
.view {
  width: 36px;
  height: 20px;
}
.view.on {
  background: #c9c9c9;
}
.zoom-step {
  width: 14px;
  font-size: 16px;
  font-weight: 600;
}
.zoom {
  width: 94px;
  height: 20px;
  appearance: none;
}
.zoom::-webkit-slider-runnable-track {
  height: 1px;
  background: #aaa;
}
.zoom::-webkit-slider-thumb {
  appearance: none;
  width: 4px;
  height: 11px;
  margin-top: -5px;
  background: #555;
}
.percent {
  width: 38px;
  text-align: right;
}

/* taskbar */
.taskbar {
  display: flex;
  height: 38px;
  background: linear-gradient(90deg, #20363c, #1f303f 70%, #1b2748);
  color: #fff;
}
.start {
  width: 45px;
}
.search {
  display: flex;
  align-items: center;
  width: 270px;
  padding: 0 8px 0 11px;
  background: #f3f3f3;
  color: #222;
  font-size: 13px;
}
.search input {
  flex: 1;
  min-width: 0;
  padding-left: 10px;
}
.search input::placeholder {
  color: #444;
  opacity: 1;
}
.task-view {
  width: 47px;
}
.apps {
  display: flex;
}
.apps button {
  position: relative;
  width: 35px;
}
.apps svg {
  width: 23px;
  height: 23px;
}
.apps .open {
  box-shadow: inset 0 -2px #76b9ed;
}
.apps .current {
  background: #4a5b67;
}
.badge {
  position: absolute;
  right: 0;
  bottom: 4px;
  width: 15px;
  height: 15px;
  border: 1px solid #999;
  border-radius: 50%;
  background: #26343c;
  font-size: 10px;
  font-style: normal;
  font-weight: 600;
  line-height: 13px;
  text-align: center;
}
.badge.brown {
  border-color: #5d4037;
  background: #5d4037;
}
.tray {
  display: flex;
  align-items: center;
  margin-left: auto;
}
.tray button {
  width: 23px;
}
.tray .weather {
  width: auto;
  gap: 7px;
  margin-right: 18px;
  font-size: 12px;
}
.clock {
  display: flex;
  flex-direction: column;
  width: 58px;
  text-align: center;
  white-space: nowrap;
  font-size: 11px;
}
.tray .notes {
  position: relative;
  width: 40px;
  height: 37px;
  margin-right: 10px;
}
.notes .badge {
  right: 3px;
}
```
